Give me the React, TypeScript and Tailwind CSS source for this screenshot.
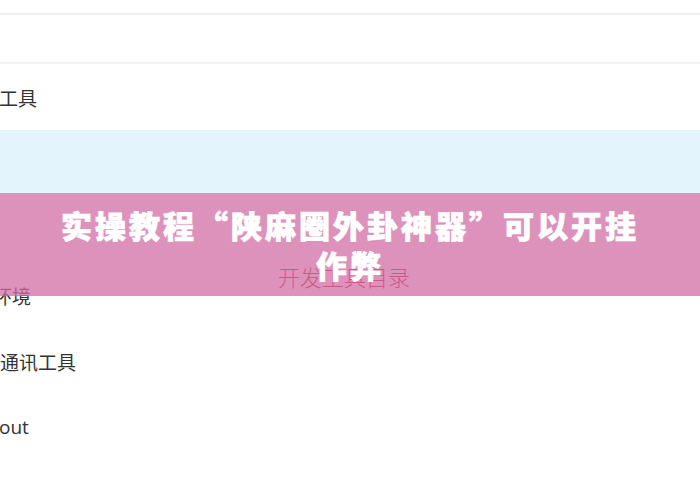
export default function App() {
  const font = { fontFamily: '"Noto Sans CJK SC", "Liberation Sans", sans-serif' };

  return (
    <div className="relative w-[700px] h-[490px] overflow-hidden bg-white" style={font}>
      {/* list page underneath */}
      <div className="h-[13px]" />
      <div className="h-[2px] bg-[#f0f0f0]" />
      <div className="h-[47px]" />
      <div className="h-[2px] bg-[#f2f2f2]" />
      <div className="h-[66px] flex items-center">
        <span className="text-[19px] leading-none text-[#333] -ml-[1px]">工具</span>
      </div>
      <div className="h-[63px] bg-[#e4f4fd]" />

      <div className="pt-[70px] -mb-[29px] pr-[12px] text-center">
        <span className="text-[22px] leading-[26px] font-light text-[#c01f1a]">开发工具目录</span>
      </div>

      <div className="h-[66px] flex items-center">
        <span className="text-[19px] leading-none text-[#333] -ml-[7px]">环境</span>
      </div>
      <div className="h-[66px] flex items-center">
        <span className="text-[19px] leading-none text-[#333]">通讯工具</span>
      </div>
      <div className="h-[66px] flex items-center">
        <span className="text-[19px] leading-none text-[#333] -ml-[1px]" style={{ fontFamily: '"Open Sans", "Noto Sans CJK SC", sans-serif' }}>out</span>
      </div>

      {/* title banner over the page */}
      <div className="absolute left-0 right-0 top-[193px] h-[103px] bg-[rgba(210,110,165,0.75)] flex items-center justify-center px-[55px]">
        <h1 className="text-center text-white text-[31px] leading-[40px] font-black tracking-[3px] [-webkit-text-stroke:0.7px_white]">
          实操教程“陕麻圈外卦神器”可以开挂作弊
        </h1>
      </div>
    </div>
  );
}
